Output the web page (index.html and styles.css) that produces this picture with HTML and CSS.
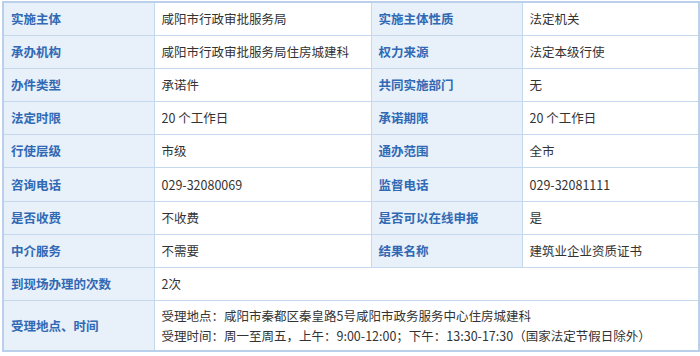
FILE: index.html
```html
<!DOCTYPE html>
<html lang="zh">
<head>
<meta charset="utf-8">
<link rel="stylesheet" href="styles.css">
</head>
<body>
<table class="info">
  <colgroup>
    <col class="c1"><col class="c2"><col class="c3"><col class="c4">
  </colgroup>
  <tbody>
    <tr><th>实施主体</th><td>咸阳市行政审批服务局</td><th>实施主体性质</th><td>法定机关</td></tr>
    <tr><th>承办机构</th><td>咸阳市行政审批服务局住房城建科</td><th>权力来源</th><td>法定本级行使</td></tr>
    <tr><th>办件类型</th><td>承诺件</td><th>共同实施部门</th><td>无</td></tr>
    <tr><th>法定时限</th><td>20 个工作日</td><th>承诺期限</th><td>20 个工作日</td></tr>
    <tr><th>行使层级</th><td>市级</td><th>通办范围</th><td>全市</td></tr>
    <tr><th>咨询电话</th><td>029-32080069</td><th>监督电话</th><td>029-32081111</td></tr>
    <tr><th>是否收费</th><td>不收费</td><th>是否可以在线申报</th><td>是</td></tr>
    <tr><th>中介服务</th><td>不需要</td><th>结果名称</th><td>建筑业企业资质证书</td></tr>
    <tr><th>到现场办理的次数</th><td colspan="3">2次</td></tr>
    <tr class="tall"><th>受理地点、时间</th><td colspan="3"><p>受理地点：咸阳市秦都区秦皇路5号咸阳市政务服务中心住房城建科</p><p>受理时间：周一至周五，上午：9:00-12:00；下午：13:30-17:30（国家法定节假日除外）</p></td></tr>
  </tbody>
</table>
</body>
</html>
```
FILE: styles.css
```css
html, body {
  margin: 0;
  padding: 0;
  background: #ffffff;
}
body {
  padding: 1px 2px 0 2px;
  font-family: "Noto Sans CJK SC", "Noto Sans", sans-serif;
}
.info {
  width: 696px;
  border-collapse: collapse;
  table-layout: fixed;
  border: 2px solid #b9cfea;
}
.c1 { width: 151px; }
.c2 { width: 217px; }
.c3 { width: 151px; }
.c4 { width: 177px; }
.info th, .info td {
  border: 1px solid #c6d8ee;
  height: 32.1px;
  padding: 0 7px;
  text-align: left;
  vertical-align: middle;
  font-size: 12.5px;
  line-height: 16px;
  white-space: nowrap;
  overflow: hidden;
}
.info th {
  background: #e8f0fa;
  color: #3069b4;
  font-weight: bold;
}
.info td {
  color: #333333;
  font-weight: normal;
}
.info tr.tall th, .info tr.tall td {
  height: 49.5px;
}
.info td p {
  margin: 0;
  line-height: 20px;
}
```
